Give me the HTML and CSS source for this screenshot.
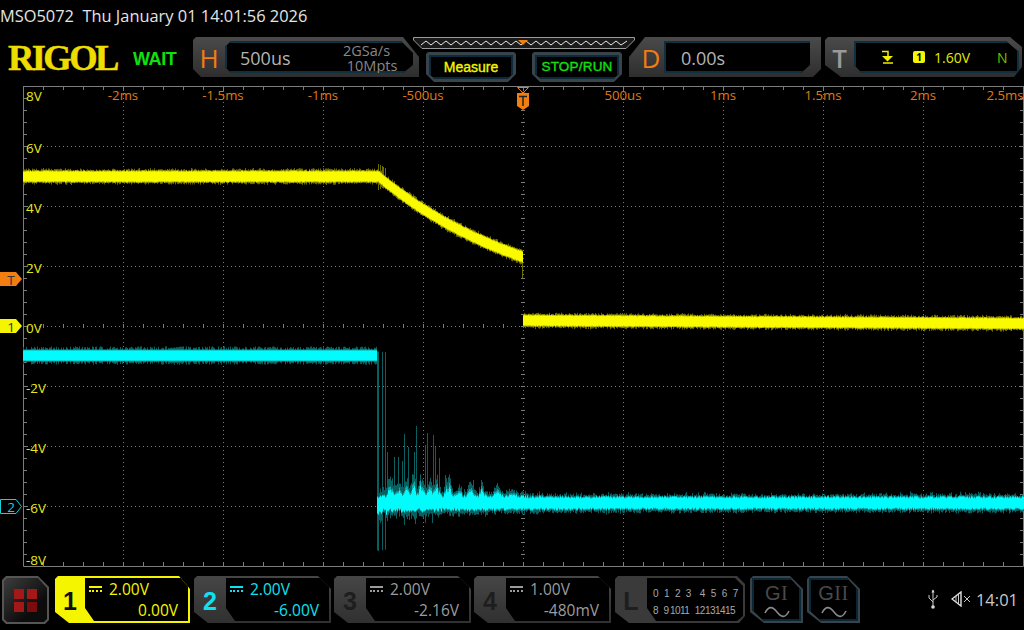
FILE: index.html
```html
<!DOCTYPE html>
<html lang="en">
<head>
<meta charset="utf-8">
<title>MSO5072</title>
<link rel="stylesheet" href="styles.css">
</head>
<body>
<div class="scope">
  <div class="status">MSO5072&nbsp; Thu January 01 14:01:56 2026</div>

  <div class="top">
    <div class="logo">RIGOL</div>
    <div class="wait">WAIT</div>

    <div class="panel panel-h">
      <div class="tag tag-orange">H</div>
      <div class="well well-h">
        <span class="value">500us</span>
        <span class="rate">2GSa/s<br>&nbsp;10Mpts</span>
      </div>
    </div>

    <div class="middle">
      <div class="strip">
        <svg class="strip-svg" width="222" height="12" viewBox="0 0 222 12">
          <path class="strip-line" d="M0.5 .5H221.5V3L213 11.5H9L.5 3Z"/>
          <path class="strip-wave" d="M8 8L13 4L18 8L23 4L28 8L33 4L38 8L43 4L48 8L53 4L58 8L63 4L68 8L73 4L78 8L83 4L88 8L93 4L98 8L103 4L108 8L113 4L118 8L123 4L128 8L133 4L138 8L143 4L148 8L153 4L158 8L163 4L168 8L173 4L178 8L183 4L188 8L193 4L198 8L203 4L208 8L214 4"/>
          <path class="strip-mark" d="M105 3H115L110 8Z"/>
        </svg>
      </div>
      <div class="buttons">
        <div class="btn"><div class="btn-in btn-measure">Measure</div></div>
        <div class="btn"><div class="btn-in btn-run">STOP/RUN</div></div>
      </div>
    </div>

    <div class="panel panel-d">
      <div class="tag tag-orange tag-d">D</div>
      <div class="well well-d"><span class="value">0.00s</span></div>
    </div>

    <div class="panel panel-t">
      <div class="tag tag-gray">T</div>
      <div class="well well-t">
        <svg class="trig-icon" width="14" height="14" viewBox="0 0 14 14">
          <path class="trig-line" d="M1 1.5H7V10M2 13H12"/>
          <path class="trig-fill" d="M1 6H12L6.5 11.5Z"/>
        </svg>
        <span class="badge">1</span>
        <span class="level">1.60V</span>
        <span class="mode">N</span>
      </div>
    </div>
  </div>

  <div class="plot">
    <svg class="plot-svg" width="1024" height="490" viewBox="0 86 1024 490">
      <g class="grid">
        <path d="M123 86V566M223 86V566M323 86V566M423 86V566M623 86V566M723 86V566M823 86V566M923 86V566M523 86V566"/>
        <path d="M23 146H1024M23 206H1024M23 266H1024M23 386H1024M23 446H1024M23 506H1024M23 326H1024"/>
      </g>
      <path class="frame" d="M23.5 566V86.5H1023.5V566.5H23.5Z"/>
      <path class="tick tick-x" d="M23 88H1024M23 564H1024M23 326H1024"/>
      <path class="tick tick-y" d="M25 86V566M523 86V566M1022 86V566"/>
      <path id="y-dim" class="tr-y-dim"/>
      <path id="y-mid" class="tr-y-mid"/>
      <path id="y-core" class="tr-y-core"/>
      <path id="c-dim" class="tr-c-dim"/>
      <path id="c-mid" class="tr-c-mid"/>
      <path id="c-core" class="tr-c-core"/>

      <g class="lab-t">
        <text x="123" y="100">-2ms</text><text x="223" y="100">-1.5ms</text><text x="323" y="100">-1ms</text>
        <text x="423" y="100">-500us</text><text x="623" y="100">500us</text><text x="723" y="100">1ms</text>
        <text x="823" y="100">1.5ms</text><text x="923" y="100">2ms</text><text x="1005" y="100">2.5ms</text>
      </g>
      <g class="lab-v">
        <text x="26" y="101">8V</text><text x="26" y="153">6V</text><text x="26" y="213">4V</text>
        <text x="26" y="273">2V</text><text x="26" y="333">0V</text><text x="26" y="393">-2V</text>
        <text x="26" y="453">-4V</text><text x="26" y="513">-6V</text><text x="26" y="565">-8V</text>
      </g>

      <path class="mk-t" d="M0 272H16L22 279L16 286H0Z"/>
      <text class="mk-tx" x="11" y="284.5">T</text>
      <path class="mk-1" d="M0 319H16L22 326L16 333H0Z"/>
      <text class="mk-tx" x="11" y="331.5">1</text>
      <path class="mk-2" d="M.5 499.5H16L21.5 506.5L16 513.5H.5Z"/>
      <text class="mk-tx2" x="11" y="511.5">2</text>

      <path class="tm-out" d="M517.5 87.5H528.5L523 93Z"/>
      <path class="mk-t" d="M517 93H521L523 91.5L525 93H529V106L523 110L517 106Z"/>
      <path class="tm-t" d="M519 96.5H527M523 96.5V106"/>
    </svg>
  </div>

  <div class="bottom">
    <div class="home">
      <div class="home-in">
        <div class="home-grid"><i></i><i></i><i></i><i></i></div>
      </div>
    </div>

    <div class="ch ch1">
      <div class="ch-num ch1-num">1</div>
      <div class="ch-in ch1-in">
        <div class="ch-row"><span class="cpl"></span><span>2.00V</span></div>
        <div class="ch-off">0.00V</div>
      </div>
    </div>
    <div class="ch ch2">
      <div class="ch-num ch2-num">2</div>
      <div class="ch-in ch2-in">
        <div class="ch-row"><span class="cpl"></span><span>2.00V</span></div>
        <div class="ch-off">-6.00V</div>
      </div>
    </div>
    <div class="ch ch3">
      <div class="ch-num">3</div>
      <div class="ch-in ch3-in">
        <div class="ch-row"><span class="cpl"></span><span>2.00V</span></div>
        <div class="ch-off">-2.16V</div>
      </div>
    </div>
    <div class="ch ch3">
      <div class="ch-num">4</div>
      <div class="ch-in ch3-in">
        <div class="ch-row"><span class="cpl"></span><span>1.00V</span></div>
        <div class="ch-off">-480mV</div>
      </div>
    </div>

    <div class="ch ch-l">
      <div class="ch-num l-num">L</div>
      <div class="ch-in l-in">
        <div class="l-row"><span>0</span><span>1</span><span>2</span><span class="l-gap">3</span><span>4</span><span>5</span><span>6</span><span>7</span></div>
        <div class="l-row2"><span class="l-wide">8</span><span class="l-near">9</span><span>10</span><span class="l-wide">11</span><span>12</span><span>13</span><span>14</span><span>15</span></div>
      </div>
    </div>

    <div class="gen">
      <div class="gen-in">
        <span class="gen-t">G<span class="gen-r">I</span></span>
        <svg class="sine" width="26" height="12" viewBox="0 0 26 12"><path d="M1 7C5 -1 9 1 13 6C17 11 21 13 25 5"/></svg>
      </div>
    </div>
    <div class="gen gen2">
      <div class="gen-in">
        <span class="gen-t">G<span class="gen-r">II</span></span>
        <svg class="sine" width="26" height="12" viewBox="0 0 26 12"><path d="M1 7C5 -1 9 1 13 6C17 11 21 13 25 5"/></svg>
      </div>
    </div>

    <div class="tray">
      <svg class="usb" width="12" height="20" viewBox="0 0 12 20">
        <path class="ic" d="M6 1V18M6 13L2 9V6M6 11L10 8V6"/>
        <circle class="ic-f" cx="6" cy="18" r="1.8"/>
        <path class="ic-f" d="M4.4 3.4L6 .5L7.6 3.4Z"/>
      </svg>
      <svg class="spk" width="20" height="16" viewBox="0 0 20 16">
        <path class="ic ic-b" d="M1 8L10 1V15Z"/>
        <path class="ic" d="M5 5V11M7.5 3V13"/>
        <path class="ic" d="M13 5L19 11M19 5L13 11"/>
      </svg>
      <span class="clock">14:01</span>
    </div>
  </div>
</div>
<script src="app.js"></script>
</body>
</html>
```
FILE: styles.css
```css
html, body { margin: 0; padding: 0; background: #000; }
body { font-family: "Open Sans", "Noto Sans", sans-serif; }
.scope { width: 1024px; height: 630px; overflow: hidden; background: #000; display: flex; flex-direction: column; }

.status { height: 37px; box-sizing: border-box; padding-top: 5px; font-size: 16.4px; line-height: 22px; color: #e4e4e4; white-space: nowrap; }

.top { height: 49px; display: flex; align-items: flex-start; }
.logo { width: 125px; margin-left: 8px; height: 40px; font-family: "Liberation Serif", serif; font-weight: 700; font-size: 36.5px; line-height: 42px; letter-spacing: -2.6px; color: #eedd00; -webkit-text-stroke: .5px #eedd00; }
.wait { width: 60px; font-family: "Liberation Sans", sans-serif; font-weight: 700; font-size: 18px; line-height: 44px; letter-spacing: -.4px; color: #10e010; }

.panel { height: 40px; display: flex; background: linear-gradient(#4a4a4a, #2e2e2e); flex: none; }
.panel-h { width: 226px; clip-path: polygon(3px 0, 210px 0, 226px 20px, 226px 100%, 8px 100%, 0 32px, 0 3px); }
.panel-d { width: 192px; margin-left: -6px; clip-path: polygon(16px 0, 100% 0, 100% 32px, 184px 100%, 0 100%, 0 20px); }
.panel-t { width: 197px; margin-left: 4px; clip-path: polygon(3px 0, 185px 0, 100% 10px, 100% 30px, 189px 100%, 16px 100%, 0 28px, 0 3px); }

.tag { flex: none; width: 32px; text-align: center; font-size: 26px; line-height: 42px; height: 40px; }
.tag-orange { color: #f27d10; }
.tag-gray { width: 29px; color: #9a9a9a; font-weight: 600; }
.tag-d { width: 36px; padding-left: 8px; box-sizing: border-box; }

.well { flex: 1; margin: 4px 4px 4px 0; background: #000; display: flex; align-items: center; box-shadow: inset 0 0 0 2px #10303f; }
.well-h { clip-path: polygon(6px 0, 176px 0, 188px 12px, 188px 24px, 178px 100%, 6px 100%, 0 26px, 0 6px); }
.well-d { clip-path: polygon(0 0, 146px 0, 146px 24px, 137px 100%, 0 100%); margin-left: -1px; }
.well-t { clip-path: polygon(0 0, 152px 0, 166px 12px, 166px 32px, 158px 100%, 8px 100%, 0 24px); margin: 4px 3px 4px 0; position: relative; }
.value { font-size: 18px; line-height: 32px; color: #b4b4b4; padding-top: 2px; }
.well-h .value { margin-left: 15px; width: 103px; }
.well-d .value { margin-left: 17px; }
.rate { font-size: 14.5px; line-height: 15px; color: #888; padding-top: 1px; }

.middle { width: 222px; margin-left: -6px; flex: none; }
.strip { height: 12px; }
.strip-svg { display: block; }
.strip-line { fill: #1a1a1a; stroke: #9a9a9a; stroke-width: 1; }
.strip-wave { fill: none; stroke: #e8e8e8; stroke-width: 1; }
.strip-mark { fill: #ef7d10; }
.buttons { display: flex; gap: 16px; margin: 3px 0 0 13px; }
.btn { width: 90px; height: 30px; padding: 3px; box-sizing: border-box; background: #38444a; clip-path: polygon(2px 0, 88px 0, 90px 2px, 90px 22px, 82px 100%, 8px 100%, 0 22px, 0 2px); }
.btn-in { height: 24px; background: #000; box-shadow: inset 0 0 0 2px #0d2a3a; text-align: center; font-family: "Liberation Sans", sans-serif; font-weight: 400; -webkit-text-stroke: .35px currentColor; font-size: 14px; line-height: 24px; clip-path: polygon(0 0, 100% 0, 100% 19px, 78px 100%, 6px 100%, 0 19px); }
.btn-measure { color: #f5f500; }
.btn-run { color: #10e010; letter-spacing: .2px; font-size: 13.5px; }

.trig-icon { margin-left: 27px; }
.badge { margin-left: 18px; width: 12px; height: 12px; border-radius: 2px; background: #f5f500; color: #000; font-size: 10px; line-height: 12px; text-align: center; font-weight: 700; }
.level { margin-left: 9px; font-size: 14px; color: #e6e600; }
.mode { margin-left: 27px; font-size: 14px; color: #70c000; }
.trig-line { fill: none; stroke: #f0f000; stroke-width: 1.5; }
.trig-fill { fill: #f0f000; }

.plot { height: 490px; }
.plot-svg { display: block; }
.grid path { fill: none; stroke: #7a7a7a; stroke-width: 1; stroke-dasharray: 1 3; shape-rendering: crispEdges; }
.frame { fill: none; stroke: #7c7c7c; stroke-width: 1; }
.tick { fill: none; stroke: #7c7c7c; shape-rendering: crispEdges; }
.tick-x { stroke-width: 4; stroke-dasharray: 1 19; }
.tick-y { stroke-width: 4; stroke-dasharray: 1 11; }

.tr-y-dim { fill: none; stroke: #6b6b00; stroke-width: 1; }
.tr-y-mid { fill: none; stroke: #b8b800; stroke-width: 1; }
.tr-y-core { fill: none; stroke: #fbfb00; stroke-width: 1; }
.tr-c-dim { fill: none; stroke: #0a6060; stroke-width: 1; }
.tr-c-mid { fill: none; stroke: #10a8a8; stroke-width: 1; }
.tr-c-core { fill: none; stroke: #00fcfc; stroke-width: 1; }

.lab-t text { font-size: 13.2px; fill: #e07a10; text-anchor: middle; }
.lab-v text { font-size: 13.5px; fill: #e6e61e; }

.mk-t { fill: #f27d10; }
.mk-1 { fill: #f5f500; }
.mk-2 { fill: #000; stroke: #18d0d8; stroke-width: 1; }
.mk-tx { font-size: 13.5px; fill: #333; text-anchor: middle; }
.mk-tx2 { font-size: 13.5px; fill: #18d0d8; text-anchor: middle; }
.tm-out { fill: none; stroke: #f27d10; stroke-width: 1; }
.tm-t { fill: none; stroke: #222; stroke-width: 1.5; }

.bottom { height: 54px; display: flex; align-items: flex-start; }
.home { width: 47px; height: 48px; margin-left: 2px; padding: 2px; box-sizing: border-box; background: #555; clip-path: polygon(4px 0, 36px 0, 47px 11px, 47px 44px, 43px 100%, 4px 100%, 0 44px, 0 4px); flex: none; }
.home-in { height: 44px; background: linear-gradient(135deg, #3d3d3d, #0c0c0c 70%); display: flex; align-items: center; justify-content: center; clip-path: polygon(3px 0, 34px 0, 43px 10px, 43px 41px, 40px 100%, 3px 100%, 0 41px, 0 3px); }
.home-grid { display: grid; grid-template-columns: 10px 10px; gap: 3px; }
.home-grid i { height: 10px; background: #a51818; }
.home-grid i:nth-child(4) { background: #7c0c0c; }

.ch { width: 137px; height: 47px; margin-left: 3px; display: flex; flex: none; background: linear-gradient(#464646, #303030); clip-path: polygon(3px 0, 124px 0, 100% 13px, 100% 100%, 14px 100%, 0 36px, 0 3px); }
.ch-num { flex: none; width: 32px; text-align: center; font-family: "Liberation Sans", sans-serif; font-weight: 700; font-size: 25px; line-height: 50px; color: #1e1e1e; }
.ch-in { flex: 1; margin: 2px 2px 2px 0; background: #000; color: #9c9c9c; font-size: 15.5px; line-height: 21px; box-sizing: border-box; padding: 0 10px 0 4px; clip-path: polygon(0 0, 122px 0, 100% 12px, 100% 100%, 9px 100%, 0 30px); }
.ch-row { display: flex; align-items: center; height: 22px; }
.ch-off { text-align: right; }
.cpl { width: 13px; height: 7px; margin-right: 7px; border-top: 2px solid currentColor; box-sizing: border-box; }
.cpl::after { content: ""; display: block; margin-top: 2px; border-top: 2px dotted currentColor; }

.ch1 { margin-left: 6px; width: 135px; background: #f5f500; }
.ch1-num { color: #111; width: 30px; }
.ch1-in { color: #f5f500; }
.ch2 { margin-left: 4px; }
.ch2-num { color: #10e0f0; }
.ch2-in { color: #10e0f0; }
.ch-l { width: 130px; margin-left: 4px; background: #3a3a3a; clip-path: polygon(3px 0, 122px 0, 100% 8px, 100% 40px, 124px 100%, 14px 100%, 0 36px, 0 3px); }
.l-num { width: 32px; }
.l-in { padding: 7px 0 0 6px; font-size: 10px; line-height: 17px; color: #a8a8a8; clip-path: polygon(0 0, 88px 0, 100% 8px, 100% 38px, 90px 100%, 9px 100%, 0 30px); font-family: "Liberation Sans", sans-serif; }
.l-row { display: flex; gap: 5.4px; white-space: nowrap; }
.l-gap { margin-right: 3px; }
.l-row2 { display: flex; letter-spacing: -.55px; white-space: nowrap; }
.l-wide { margin-right: 5.5px; }
.l-near { margin-right: 1.5px; }

.gen { width: 53px; height: 47px; margin-left: 5px; padding: 2px; box-sizing: border-box; background: #39434a; flex: none; clip-path: polygon(3px 0, 40px 0, 100% 13px, 100% 100%, 14px 100%, 0 36px, 0 3px); }
.gen-in { height: 43px; background: #000; display: flex; flex-direction: column; align-items: center; clip-path: polygon(0 0, 38px 0, 100% 12px, 100% 100%, 12px 100%, 0 32px); box-shadow: inset 0 0 0 2px #0b2636; }
.gen2 { margin-left: 4px; }
.gen-t { font-family: "Liberation Sans", sans-serif; font-size: 20px; line-height: 24px; color: #4a4a4a; margin-top: 3px; letter-spacing: .5px; }
.gen-r { font-family: "Liberation Serif", serif; }
.sine { display: block; margin-top: 1px; }
.sine path { fill: none; stroke: #8a8a8a; stroke-width: 1.6; }

.tray { margin-left: auto; display: flex; align-items: center; height: 46px; padding-right: 6px; }
.usb { margin-right: 12px; }
.spk { margin-right: 5px; }
.ic { fill: none; stroke: #c8c8c8; stroke-width: 1; }
.ic-b { stroke: #e0e0e0; stroke-width: 1.4; }
.ic-f { fill: #d8d8d8; }
.clock { font-size: 16.5px; color: #c8c8c8; }
```
FILE: app.js
```js
// Draws the two scope traces as seeded noise, one vertical stroke per pixel column.
var seed = 5072;
function rnd() {
  seed = (seed * 1664525 + 1013904223) % 4294967296;
  return seed / 4294967296;
}
function seg(x, a, b) {
  return "M" + (x + 0.5) + " " + a.toFixed(1) + "V" + b.toFixed(1);
}
function yCentre(x) {
  if (x < 378) return 176.5;
  if (x < 523) return 176.5 + 138 * (1 - Math.exp(-(x - 378) / 165));
  return 320.5 + (x - 523) * 0.006;
}
var yd = "", ym = "", yc = "";
for (var x = 23; x < 1024; x++) {
  var c = yCentre(x);
  var hiTop = 4.6 + rnd() * 0.8;
  var hiBot = 4.6 + rnd() * 0.8;
  yc += seg(x, c - hiTop, c + hiBot);
  ym += seg(x, c - hiTop - 1, c + hiBot + 1);
  if (rnd() < 0.75) yd += seg(x, c - hiTop - 1 - rnd() * 2.2, c + hiBot + 1 + rnd() * 2.2);
}
[378, 380, 382, 383, 385].forEach(function (v, i) {
  yd += seg(v, 164 + i, 190 - i);
});
yd += seg(522, 262, 278);

var cd = "", cm = "", cc = "";
for (x = 23; x < 377; x++) {
  cc += seg(x, 350.5, 360.5);
  cm += seg(x, 349.5, 361.5);
  if (rnd() < 0.7) cd += seg(x, 348.5 - rnd() * 2.2, 362.5 + rnd() * 2.2);
}
[377, 378, 382, 385].forEach(function (v) {
  cd += seg(v, 350 + rnd() * 2, 549 + rnd() * 3);
});
// bright lumps of the ringing after the edge: [x, height]
var lumps = [[390, 9], [398, 7], [406, 10], [413, 12], [421, 14], [429, 9], [436, 11], [448, 12], [458, 7], [470, 8], [482, 7], [497, 7], [512, 4]];
function lump(x) {
  var h = 0;
  lumps.forEach(function (l) {
    var d = (x - l[0]) / 3.2;
    h = Math.max(h, l[1] * Math.exp(-d * d));
  });
  return h;
}
for (x = 377; x < 1024; x++) {
  var env = Math.exp(-Math.max(0, x - 377) / 75);
  var l = lump(x) * (0.45 + 0.55 * rnd());
  var up = 4.5 + l + rnd() * (x < 540 ? 3 : 2);
  var dn = 4.5 + rnd() * 2 + env * 6 * rnd();
  var mid = 503;
  cc += seg(x, mid - up, mid + dn);
  cm += seg(x, mid - up - 1 - l * 0.35, mid + dn + 1);
  var spike = x < 540 ? 2 + l * 0.8 + 6 * rnd() * (0.4 + env) : 0.5 + rnd() * 3 + rnd() * rnd() * 3;
  cd += seg(x, mid - up - spike, mid + dn + 1.5 + rnd() * (3 + env * 7));
}
// isolated tall and deep spikes: [x, top]
[[387, 452], [394, 457], [398, 457], [402, 461], [404, 434], [408, 447], [414, 452], [416, 426], [425, 445], [427, 433], [433, 435], [435, 447], [439, 458], [445, 475], [448, 477], [473, 480], [497, 483]].forEach(function (s) {
  cd += seg(s[0], s[1], 500);
});
[[404, 525], [415, 524], [425, 523], [432, 523]].forEach(function (s) {
  cd += seg(s[0], 505, s[1]);
});
document.getElementById("y-dim").setAttribute("d", yd);
document.getElementById("y-mid").setAttribute("d", ym);
document.getElementById("y-core").setAttribute("d", yc);
document.getElementById("c-dim").setAttribute("d", cd);
document.getElementById("c-mid").setAttribute("d", cm);
document.getElementById("c-core").setAttribute("d", cc);
```
